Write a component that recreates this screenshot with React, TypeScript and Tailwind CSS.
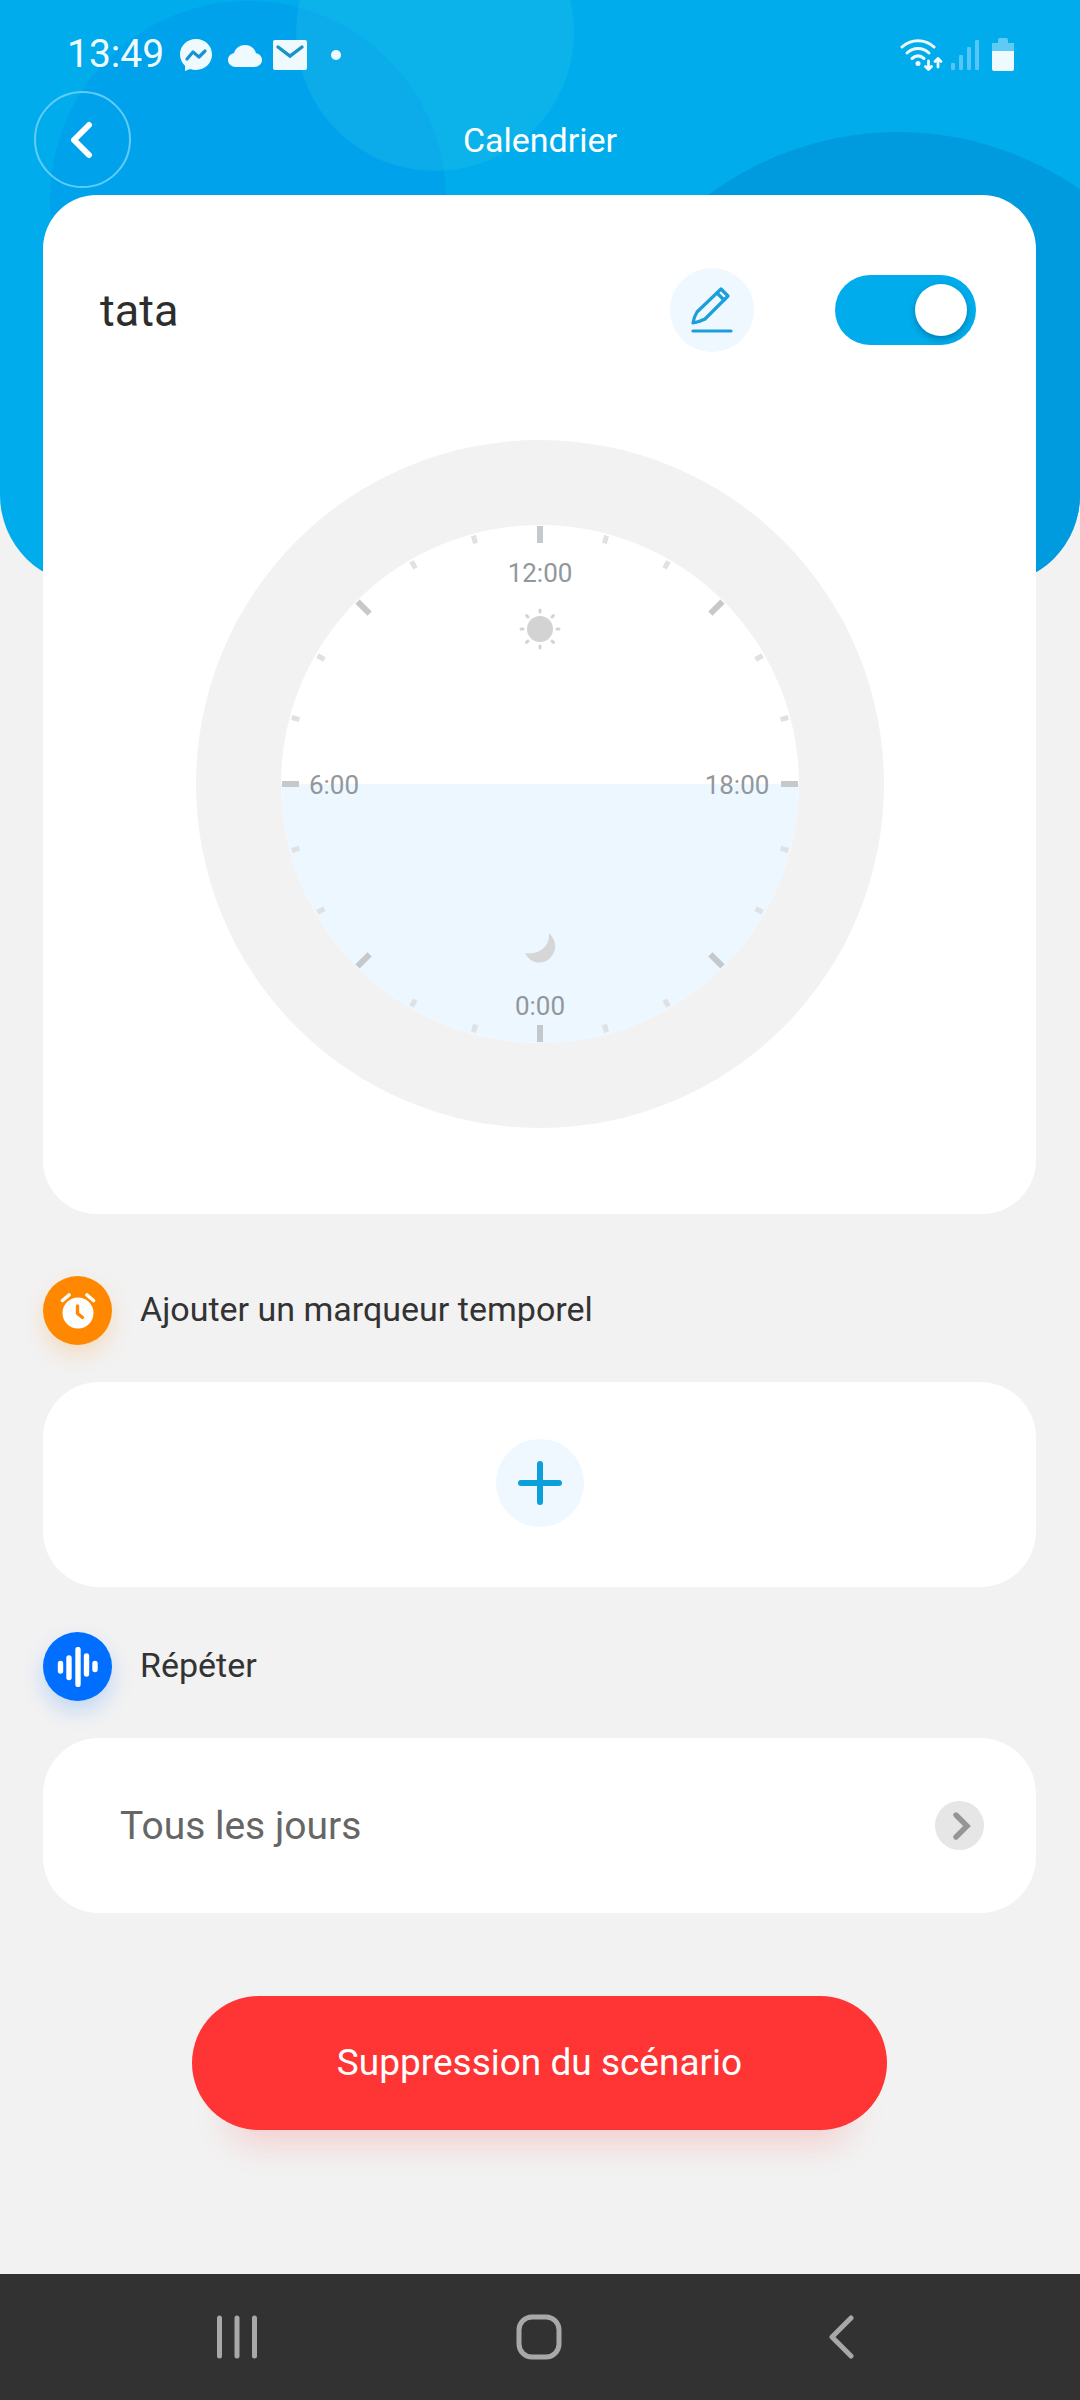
import React, { useState } from 'react';

const HOURS = Array.from({ length: 24 }, (_, i) => i);

const HeaderBackdrop: React.FC = () => (
  <div className="absolute inset-x-0 top-0 h-[585px] overflow-hidden rounded-b-[90px] bg-[#00aceb]">
    <svg className="h-full w-full" viewBox="0 0 1080 585" preserveAspectRatio="xMidYMin slice" aria-hidden="true">
      <circle cx="248" cy="199" r="198" fill="#00a2eb" />
      <circle cx="435" cy="32" r="139" fill="#3cd4e6" fillOpacity="0.2" />
      <circle cx="898" cy="449" r="317" fill="#009bde" />
    </svg>
  </div>
);

const StatusBar: React.FC = () => (
  <div className="flex h-[91px] items-center justify-between pt-[18px] pr-[66px] pl-[67px] text-[#effaff]">
    <div className="flex items-center">
      <span className="text-[39px] leading-none">13:49</span>
      <svg className="ml-4 h-8 w-8" viewBox="0 0 32 32" aria-hidden="true">
        <path d="M16 0C7 0 0 6.600 0 15.500c0 4.600 2 8.500 5 11.300V32l5-2c2 .6 4 .9 6 .9 9 0 16-6.600 16-15.400S25 0 16 0Z" fill="currentColor" />
        <path d="m7 20 6-7 6 5 6-6" fill="none" stroke="#1793d4" strokeWidth="3.200" strokeLinejoin="round" strokeLinecap="round" />
      </svg>
      <svg className="ml-4 h-8 w-[34px]" viewBox="0 0 34 32" aria-hidden="true">
        <path d="M8 28c-4.400 0-8-3-8-7 0-3.500 2.500-6.300 6-6.800C7.500 9 11.800 6 17 6s9.500 3 11 8.200c3.500.5 6 3.300 6 6.800 0 4-3.600 7-8 7Z" fill="currentColor" />
      </svg>
      <svg className="ml-[11px] h-[30px] w-[34px]" viewBox="0 0 34 30" aria-hidden="true">
        <rect width="34" height="30" rx="2" fill="currentColor" />
        <path d="m5 7 12 9L29 7" fill="none" stroke="#1793c4" strokeWidth="3.400" strokeLinecap="round" />
      </svg>
      <span className="ml-6 h-[10px] w-[10px] rounded-full bg-current" />
    </div>
    <div className="flex items-center">
      <svg className="h-8 w-[43px]" viewBox="0 0 43 32" aria-hidden="true">
        <g fill="none" stroke="currentColor" strokeWidth="3" strokeLinecap="round">
          <path d="M2 8C11-.5 25-.5 34 8" />
          <path d="M7 14c6.500-6 15.500-6 22 0" />
          <path d="M12 19.500c4-3.500 8-3.500 12 0" />
        </g>
        <circle cx="18" cy="24.500" r="2.500" fill="currentColor" />
        <g fill="none" stroke="currentColor" strokeWidth="2.800" strokeLinecap="round" strokeLinejoin="round">
          <path d="M28.500 22v8m-3-2.500 3 3 3-3" />
          <path d="M38 28v-8m-3 2.500 3-3 3 3" />
        </g>
      </svg>
      <svg className="ml-2 h-[30px] w-7" viewBox="0 0 28 30" fill="#55c6f5" aria-hidden="true">
        <rect x="0" y="23" width="4" height="7" rx="1" />
        <rect x="8" y="15" width="4" height="15" rx="1" />
        <rect x="16" y="7" width="4" height="23" rx="1" />
        <rect x="24" y="0" width="4" height="30" rx="1" />
      </svg>
      <svg className="ml-[13px] h-[33px] w-[22px]" viewBox="0 0 22 33" aria-hidden="true">
        <path d="M0 14V5h6V2q0-2 2-2h6q2 0 2 2v3h6v9Z" fill="#5fcbf5" />
        <path d="M0 13h22v18q0 2-2 2H2q-2 0-2-2Z" fill="currentColor" />
      </svg>
    </div>
  </div>
);

const DayDial: React.FC = () => (
  <svg className="mx-auto block w-full max-w-[688px]" viewBox="0 0 688 688" role="img" aria-label="Cadran 24 heures">
    <circle cx="344" cy="344" r="344" fill="#f2f2f2" />
    <circle cx="344" cy="344" r="259" fill="#ffffff" />
    <path d="M85 344a259 259 0 0 0 518 0Z" fill="#edf7ff" />
    {HOURS.map((h) => {
      const major = h % 3 === 0;
      return (
        <line
          key={h}
          x1="344"
          x2="344"
          y1={major ? 86 : 87}
          y2={major ? 103 : 95}
          stroke={major ? '#c6c9cb' : '#dfe1e3'}
          strokeWidth={major ? 6 : 5}
          transform={`rotate(${h * 15} 344 344)`}
        />
      );
    })}
    <g fill="#92979b" fontSize="26" textAnchor="middle">
      <text x="344" y="142">12:00</text>
      <text x="138" y="354">6:00</text>
      <text x="541" y="354">18:00</text>
      <text x="344" y="575">0:00</text>
    </g>
    {/* sun */}
    <circle cx="344" cy="189" r="13" fill="#d3d3d3" />
    {[0, 45, 90, 135, 180, 225, 270, 315].map((a) => (
      <line key={a} x1="344" x2="344" y1="170" y2="172" stroke="#d3d3d3" strokeWidth="3" strokeLinecap="round" transform={`rotate(${a} 344 189)`} />
    ))}
    {/* moon */}
    <path d="M353 493c8 8 8 17 2 24-7 8-20 8-26-4 14 2 25-6 24-20Z" fill="#d6d6d8" />
  </svg>
);

interface SectionTitleProps {
  title: string;
  className: string;
  children: React.ReactNode;
}

const SectionTitle: React.FC<SectionTitleProps> = ({ title, className, children }) => (
  <div className="flex items-center gap-7">
    <span className={`flex h-[69px] w-[69px] items-center justify-center rounded-full ${className}`}>{children}</span>
    <h2 className="pb-[3px] text-[34px] leading-10 text-[#333333]">{title}</h2>
  </div>
);

const App: React.FC = () => {
  const [enabled, setEnabled] = useState(true);

  return (
    <div className="relative flex min-h-screen flex-col bg-[#f2f2f2] font-[Roboto,sans-serif]">
      <HeaderBackdrop />

      <header className="relative">
        <StatusBar />
        <div className="flex items-center px-[34px]">
          <button aria-label="Retour" className="flex h-[97px] w-[97px] items-center justify-center rounded-full border-2 border-[#5fcdf8]">
            <svg className="h-10 w-6" viewBox="0 0 24 40" fill="none" stroke="#ffffff" strokeWidth="6" strokeLinecap="round" strokeLinejoin="round">
              <path d="M18 5 3 20l15 15" />
            </svg>
          </button>
          <h1 className="flex-1 text-center text-[34px] leading-10 text-white">Calendrier</h1>
          <span className="w-[97px]" />
        </div>
      </header>

      <main className="relative pt-[7px] pr-11 pl-[43px]">
        <section className="rounded-[54px] bg-white pt-[73px] pb-[86px]">
          <div className="flex items-center pr-[60px] pl-[57px]">
            <h2 className="flex-1 pt-[2px] text-[45px] leading-[54px] text-[#2d2d2d]">tata</h2>
            <button aria-label="Modifier le nom" className="flex h-[84px] w-[84px] items-center justify-center rounded-full bg-[#f0f8ff]">
              <svg className="h-12 w-[42px]" viewBox="0 0 42 48" fill="none" stroke="#1a9fda" strokeWidth="3.200" strokeLinecap="round" strokeLinejoin="round">
                <path d="M30 3 37 10 14 33Q8 36 2 37 3 31 6 26Z" />
                <path d="m26 7 7 7" />
                <path d="M2 45h38" />
              </svg>
            </button>
            <label className="relative ml-[81px] block cursor-pointer">
              <input
                type="checkbox"
                role="switch"
                aria-label="Activer le calendrier"
                checked={enabled}
                onChange={(e) => setEnabled(e.target.checked)}
                className="peer sr-only"
              />
              <span className="flex h-[70px] w-[141px] items-center rounded-full bg-[#cccccc] px-[9px] peer-checked:justify-end peer-checked:bg-[#00aceb]">
                <span className="h-[52px] w-[52px] rounded-full bg-white shadow-[0_3px_6px_rgba(0,60,100,0.4)]" />
              </span>
            </label>
          </div>
          <div className="mt-[88px]">
            <DayDial />
          </div>
        </section>

        <section className="pt-[62px]">
          <SectionTitle title="Ajouter un marqueur temporel" className="bg-[#ff8800] shadow-[0_10px_22px_rgba(255,136,0,0.2)]">
            <svg className="h-9 w-9" viewBox="0 0 36 36" aria-hidden="true">
              <circle cx="18" cy="20" r="15.500" fill="#ffffff" />
              <path d="M17.500 13v7.500l5 4" fill="none" stroke="#ff8800" strokeWidth="3.400" strokeLinecap="round" strokeLinejoin="round" />
              <path d="M2.500 7.500 9 2M33.500 7.500 27 2" stroke="#ffffff" strokeWidth="3.600" strokeLinecap="round" />
            </svg>
          </SectionTitle>
          <div className="mt-[37px] flex h-[205px] items-center justify-center rounded-[56px] bg-white pb-[3px]">
            <button aria-label="Ajouter un marqueur" className="flex h-[88px] w-[88px] items-center justify-center rounded-full bg-[#f0f8ff]">
              <svg className="h-11 w-11" viewBox="0 0 44 44" stroke="#0b9fdc" strokeWidth="6" strokeLinecap="round">
                <path d="M22 3v38M3 22h38" />
              </svg>
            </button>
          </div>
        </section>

        <section className="pt-[45px]">
          <SectionTitle title="Répéter" className="bg-[#006eff] shadow-[0_10px_22px_rgba(0,110,255,0.2)]">
            <svg className="h-10 w-[42px]" viewBox="0 0 42 40" stroke="#ffffff" strokeWidth="5.400" strokeLinecap="round" aria-hidden="true">
              <path d="M3.500 16.500v7.500M12 11v19.500M21 2.500v35M29.500 9v18M38 16.500v6" />
            </svg>
          </SectionTitle>
          <button className="mt-[37px] flex h-[175px] w-full items-center justify-between rounded-[56px] bg-white pr-[52px] pl-[77px]">
            <span className="text-[39px] leading-[46px] text-[#666666]">Tous les jours</span>
            <svg className="h-[49px] w-[49px]" viewBox="0 0 49 49" aria-hidden="true">
              <circle cx="24.500" cy="24.500" r="24.500" fill="#e6e6e6" />
              <path d="m21 14 11 11-11 11" fill="none" stroke="#959595" strokeWidth="5.400" strokeLinecap="round" strokeLinejoin="miter" />
            </svg>
          </button>
        </section>

        <div className="flex justify-center pt-[83px] pb-20">
          <button className="h-[134px] w-[70%] rounded-full bg-[#ff3434] text-[37px] text-white shadow-[0_48px_36px_-36px_rgba(255,52,52,0.2)]">
            Suppression du scénario
          </button>
        </div>
      </main>

      <nav className="relative mt-auto grid h-[126px] grid-cols-3 items-center justify-items-center bg-[#323232] pr-[87px] pl-[86px]">
        <button aria-label="Applications récentes">
          <svg className="h-11 w-[46px]" viewBox="0 0 46 44" stroke="#a8a8a8" strokeWidth="5" strokeLinecap="round">
            <path d="M5.500 3v38M23 3v38M40.500 3v38" />
          </svg>
        </button>
        <button aria-label="Accueil">
          <svg className="h-[46px] w-[46px]" viewBox="0 0 46 46" fill="none" stroke="#a8a8a8" strokeWidth="5">
            <rect x="3" y="3" width="40" height="40" rx="13" />
          </svg>
        </button>
        <button aria-label="Précédent">
          <svg className="h-11 w-[30px]" viewBox="0 0 30 44" fill="none" stroke="#a8a8a8" strokeWidth="5" strokeLinecap="round" strokeLinejoin="round">
            <path d="M24 3 5 22l19 19" />
          </svg>
        </button>
      </nav>
    </div>
  );
};

export default App;
